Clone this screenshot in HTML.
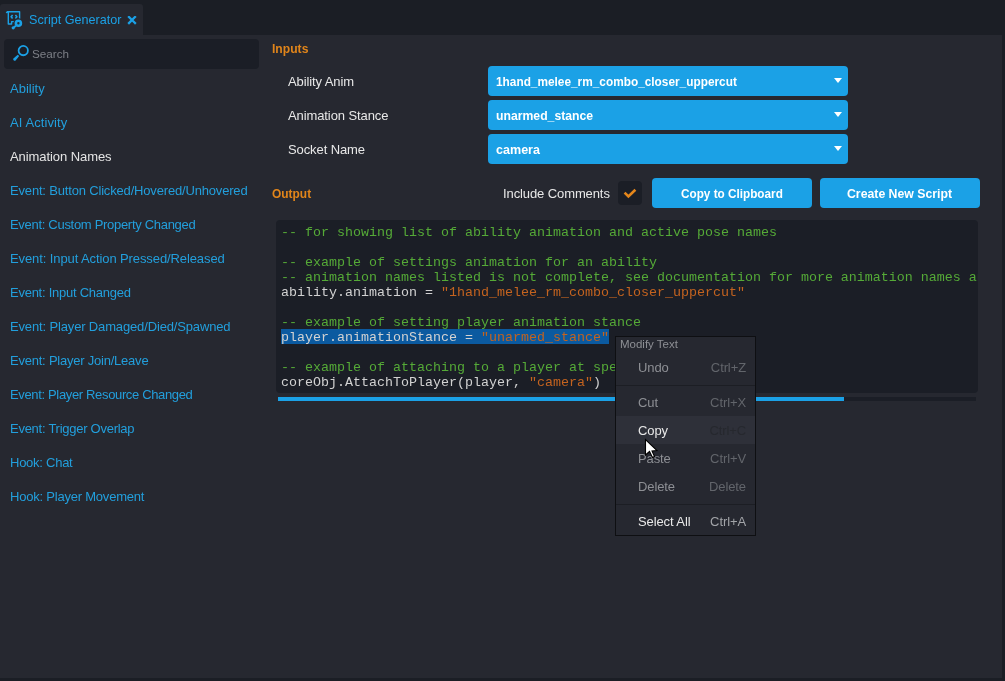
<!DOCTYPE html>
<html><head><meta charset="utf-8">
<style>
*{margin:0;padding:0;box-sizing:border-box}
html,body{width:1005px;height:681px;overflow:hidden;background:#1b1e25;font-family:"Liberation Sans",sans-serif;font-size:13px;color:#e4e4e4;position:relative;-webkit-font-smoothing:antialiased}
#root{position:absolute;left:0;top:0;width:1005px;height:681px;will-change:transform}
.abs{position:absolute;white-space:pre}
.sx{display:inline-block;transform-origin:0 50%}
#tab{position:absolute;left:0;top:4px;width:143px;height:32px;background:#262830;border-radius:3px 3px 0 0}
#panel{position:absolute;left:0;top:35px;width:1002px;height:643px;background:#262830}
#search{position:absolute;left:4px;top:39px;width:255px;height:30px;background:#1b1e26;border-radius:4px}
.item{position:absolute;left:10px;color:#229fdc;white-space:pre;line-height:16px;letter-spacing:-0.3px}
.lbl{position:absolute;left:288px;white-space:pre;line-height:16px;color:#e8e8e8;letter-spacing:-0.1px}
.dd{position:absolute;left:488px;width:360px;height:30px;background:#1ba1e6;border-radius:4px;color:#fff;font-weight:bold;font-size:13.5px}
.dd span{position:absolute;left:8px;top:8px;line-height:16px;white-space:pre;transform-origin:0 50%}
.dd i{position:absolute;right:6px;top:12px;width:0;height:0;border-left:4px solid transparent;border-right:4px solid transparent;border-top:5px solid #fff}
.hdr{position:absolute;left:272px;color:#e1851a;font-weight:bold;font-size:12.5px;line-height:16px;transform-origin:0 50%}
.btn{position:absolute;top:178px;height:30px;background:#1ba1e6;border-radius:4px;color:#fff;font-weight:bold;font-size:12.5px;line-height:30px}
.btn span{position:absolute;top:1px;white-space:pre;transform-origin:0 50%}
#code{position:absolute;left:276px;top:220px;width:702px;height:173px;background:#1b1e26;border-radius:4px;overflow:hidden}
#lines{position:absolute;left:5px;top:5px;font-family:"Liberation Mono",monospace;font-size:13.333px;line-height:15px;white-space:pre;color:#d2d2d2}
.c{color:#55aa37}
.s{color:#c4631f}
.sel{}
#track{position:absolute;left:278px;top:397px;width:698px;height:4px;background:#1b1e26}
#thumb{position:absolute;left:278px;top:397px;width:566px;height:4px;background:#1ba1e6}
#menu{position:absolute;left:615px;top:336px;width:141px;height:200px;background:#262830;border:1px solid #0e0f12}
.mi{position:absolute;left:22px;white-space:pre;line-height:16px;color:#8d8f94;letter-spacing:-0.1px}
.ms{position:absolute;right:9px;white-space:pre;line-height:16px;color:#62656b;letter-spacing:-0.1px}
.sep{position:absolute;left:0;width:139px;height:1px;background:#1c1e24}
</style></head><body><div id="root">
<div id="tab"></div>
<div id="panel"></div>
<!-- tab icon -->
<svg class="abs" style="left:4px;top:8px" width="22" height="24" viewBox="0 0 22 24">
  <g fill="none" stroke="#1ba1e6" stroke-width="1.4" stroke-linejoin="round">
    <path d="M3 3.8 H15.6 V11"/>
    <path d="M4.3 3.8 V16 H7.6 V13.6 H10"/>
    <path d="M2.4 5.2 Q2.6 3.8 4.3 3.8"/>
    <path d="M8.6 7 L7.1 8.8 L8.6 10.6 M11.4 7 L12.9 8.8 L11.4 10.6" stroke-width="1.6"/>
  </g>
  <circle cx="14.4" cy="15.3" r="5" fill="#262830"/>
  <circle cx="14.4" cy="15.3" r="2.5" fill="none" stroke="#1ba1e6" stroke-width="2.6"/>
  <path d="M11.8 17.8 L9 20.2" stroke="#1ba1e6" stroke-width="1.8"/>
  <circle cx="9.2" cy="19.8" r="1.6" fill="#1ba1e6"/>
</svg>
<div class="abs" style="left:29px;top:12px;line-height:16px;color:#1ba1e6;font-size:12.6px">Script Generator</div>
<svg class="abs" style="left:127px;top:16px" width="10" height="9" viewBox="0 0 10 9"><path d="M2 1.0 L8 7.0 M8 1.0 L2 7.0" stroke="#1ba1e6" stroke-width="2.3" stroke-linecap="square"/></svg>

<div id="search"></div>
<svg class="abs" style="left:12px;top:44px" width="18" height="18" viewBox="0 0 18 18">
  <circle cx="11.25" cy="6.6" r="4.65" fill="none" stroke="#1ba1e6" stroke-width="1.8"/>
  <path d="M5.8 10.7 L7.2 12.1 L3.6 16.6 Q2.6 17.2 1.6 16.2 Q0.8 15.2 1.4 14.4 Z" fill="#1ba1e6"/>
</svg>
<div class="abs" style="left:32px;top:46px;line-height:16px;color:#7c7f86;font-size:11.7px">Search</div>

<div class="item" style="top:81px;letter-spacing:0.000px">Ability</div>
<div class="item" style="top:115px;letter-spacing:0.090px">AI Activity</div>
<div class="item" style="top:149px;color:#e4e4e4;letter-spacing:-0.071px">Animation Names</div>
<div class="item" style="top:183px;letter-spacing:-0.174px">Event: Button Clicked/Hovered/Unhovered</div>
<div class="item" style="top:217px;letter-spacing:-0.300px">Event: Custom Property Changed</div>
<div class="item" style="top:251px;letter-spacing:-0.100px">Event: Input Action Pressed/Released</div>
<div class="item" style="top:285px;letter-spacing:-0.258px">Event: Input Changed</div>
<div class="item" style="top:319px;letter-spacing:-0.148px">Event: Player Damaged/Died/Spawned</div>
<div class="item" style="top:353px;letter-spacing:-0.226px">Event: Player Join/Leave</div>
<div class="item" style="top:387px;letter-spacing:-0.348px">Event: Player Resource Changed</div>
<div class="item" style="top:421px;letter-spacing:-0.262px">Event: Trigger Overlap</div>
<div class="item" style="top:455px;letter-spacing:-0.256px">Hook: Chat</div>
<div class="item" style="top:489px;letter-spacing:-0.215px">Hook: Player Movement</div>

<div class="hdr" style="top:41px;transform:scaleX(0.97)">Inputs</div>
<div class="lbl" style="top:74px">Ability Anim</div>
<div class="lbl" style="top:108px">Animation Stance</div>
<div class="lbl" style="top:142px">Socket Name</div>
<div class="dd" style="top:66px"><span style="transform:scaleX(0.877)">1hand_melee_rm_combo_closer_uppercut</span><i></i></div>
<div class="dd" style="top:100px"><span style="transform:scaleX(0.905)">unarmed_stance</span><i></i></div>
<div class="dd" style="top:134px"><span style="transform:scaleX(0.93)">camera</span><i></i></div>

<div class="hdr" style="top:186px;transform:scaleX(0.955)">Output</div>
<div class="abs" style="left:503px;top:186px;line-height:16px;color:#e8e8e8;letter-spacing:-0.1px">Include Comments</div>
<div class="abs" style="left:618px;top:181px;width:24px;height:24px;background:#1b1e26;border-radius:4px"></div>
<svg class="abs" style="left:618px;top:181px" width="24" height="24" viewBox="0 0 24 24"><path d="M6.6 11.6 L10.4 15.4 L17.4 8.8" fill="none" stroke="#e4861b" stroke-width="2.6"/></svg>
<div class="btn" style="left:652px;width:160px"><span style="left:29px;transform:scaleX(0.94)">Copy to Clipboard</span></div>
<div class="btn" style="left:820px;width:160px"><span style="left:27px;transform:scaleX(0.982)">Create New Script</span></div>

<div id="code"><div style="position:absolute;left:5px;top:109px;width:328px;height:15px;background:#0b5aa0"></div><div id="lines"><span class="c">-- for showing list of ability animation and active pose names</span>

<span class="c">-- example of settings animation for an ability</span>
<span class="c">-- animation names listed is not complete, see documentation for more animation names and their usage</span>
ability.animation = <span class="s">"1hand_melee_rm_combo_closer_uppercut"</span>

<span class="c">-- example of setting player animation stance</span>
<span class="sel">player.animationStance = <span class="s">"unarmed_stance"</span></span>

<span class="c">-- example of attaching to a player at specific socket</span>
coreObj.AttachToPlayer(player, <span class="s">"camera"</span>)</div></div>
<div id="track"></div>
<div id="thumb"></div>

<div id="menu">
  <div class="abs" style="left:4px;top:0px;line-height:14px;font-size:11.5px;color:#8d8f94">Modify Text</div>
  <div class="mi" style="top:23px">Undo</div><div class="ms" style="top:23px">Ctrl+Z</div>
  <div class="sep" style="top:48px"></div>
  <div class="mi" style="top:58px">Cut</div><div class="ms" style="top:58px">Ctrl+X</div>
  <div style="position:absolute;left:0;top:79px;width:139px;height:28px;background:#2e3039"></div>
  <div class="mi" style="top:86px;color:#e8e8e8">Copy</div><div class="ms" style="top:86px;color:#26282e">Ctrl+C</div>
  <div class="mi" style="top:114px">Paste</div><div class="ms" style="top:114px">Ctrl+V</div>
  <div class="mi" style="top:142px">Delete</div><div class="ms" style="top:142px">Delete</div>
  <div class="sep" style="top:167px"></div>
  <div class="mi" style="top:177px;color:#e8e8e8">Select All</div><div class="ms" style="top:177px;color:#a2a4a8">Ctrl+A</div>
</div>
<svg class="abs" style="left:644px;top:438px" width="16" height="22" viewBox="0 0 16 22">
  <path d="M1.5 1.5 L1.5 17 L5.5 13.5 L8.5 19.5 L10.5 18.5 L8 13 L13 12.5 Z" fill="#fff" stroke="#000" stroke-width="1.1" stroke-linejoin="miter"/>
</svg>
</div></body></html>
